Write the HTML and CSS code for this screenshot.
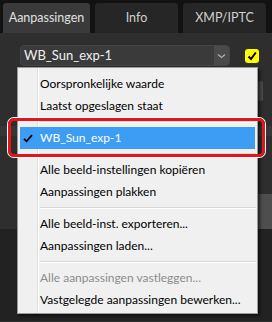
FILE: index.html
```html
<!DOCTYPE html>
<html lang="nl">
  <head>
    <meta charset="UTF-8" />
    <title>Aanpassingen</title>
    <link rel="stylesheet" href="styles.css">
  </head>
  <body>
    <div class="tabs">
      <div class="tab active">Aanpassingen</div>
      <div class="tab">Info</div>
      <div class="tab">XMP/IPTC</div>
    </div>
    <div class="panel">
      <div class="combo-row">
        <div class="combo">
          <span class="combo-text">WB_Sun_exp-1</span>
          <span class="combo-arrow">
            <svg width="9" height="6" viewBox="0 0 9 6"><path d="M1 1.5 L4.5 4.5 L8 1.5" fill="none" stroke="#b0b0b0" stroke-width="1.2"/></svg>
          </span>
        </div>
        <span class="check">
          <svg width="12" height="12" viewBox="0 0 12 12"><path d="M2.5 6.5 L5 9 L9.8 2.5" fill="none" stroke="#000" stroke-width="2"/></svg>
        </span>
      </div>

      <div class="behind">
        <div class="knob"></div>
        <div class="band"></div>
        <div class="block"></div>
        <div class="low"></div>
      </div>

      <ul class="menu">
        <li class="item">Oorspronkelijke waarde</li>
        <li class="item">Laatst opgeslagen staat</li>
        <li class="sep"></li>
        <li class="item selected">
          <svg class="tick" width="10" height="9" viewBox="0 0 10 9"><path d="M1 4.8 L3.6 7.3 L9 1.2" fill="none" stroke="#000" stroke-width="1.8"/></svg>
          WB_Sun_exp-1
        </li>
        <li class="sep"></li>
        <li class="item">Alle beeld-instellingen kopiëren</li>
        <li class="item">Aanpassingen plakken</li>
        <li class="sep"></li>
        <li class="item">Alle beeld-inst. exporteren...</li>
        <li class="item">Aanpassingen laden...</li>
        <li class="sep"></li>
        <li class="item disabled">Alle aanpassingen vastleggen...</li>
        <li class="item">Vastgelegde aanpassingen bewerken...</li>
      </ul>

      <div class="callout"></div>
    </div>
  </body>
</html>
```

FILE: styles.css
```css
body {
  margin: 0;
  width: 272px;
  height: 322px;
  overflow: hidden;
  background-color: #121212;
  font-family: Lato, "Noto Sans", sans-serif;
}

.tabs {
  display: flex;
  gap: 5px;
  padding: 3px 5px 0 3px;
  height: 30px;
}

.tab {
  height: 30px;
  line-height: 29px;
  text-align: center;
  font-size: 12.5px;
  color: #d0d0d0;
  background-color: #262626;
  border-radius: 3px 3px 0 0;
  width: 83px;
  white-space: nowrap;
}

.tab.active {
  width: 87px;
  background-color: #3a3a3a;
  color: #e0e0e0;
}

.panel {
  position: relative;
  height: 289px;
  background-color: #2e2e2e;
}

.combo-row {
  display: flex;
  align-items: center;
  padding: 12px 0 0 20px;
  gap: 15px;
}

.combo {
  display: flex;
  width: 210px;
  height: 21px;
  box-sizing: border-box;
  border: 1px solid #454545;
  border-radius: 4px;
  background-color: #3a3a3a;
  overflow: hidden;
}

.combo-text {
  flex: 1;
  padding-left: 3px;
  font-size: 13px;
  line-height: 19px;
  color: #f0f0f0;
}

.combo-arrow {
  width: 15px;
  display: flex;
  align-items: center;
  justify-content: center;
  background-color: #4a4a4a;
}

.check {
  width: 14px;
  height: 14px;
  border-radius: 3px;
  background-color: #ffff00;
  display: flex;
  align-items: center;
  justify-content: center;
}

.behind {
  display: flex;
  flex-direction: column;
  align-items: flex-end;
  padding-top: 15px;
}

.knob {
  width: 5px;
  height: 20px;
  margin-right: 9px;
  border-radius: 2px;
  background-color: #4a4a4a;
}

.band {
  width: 100%;
  height: 10px;
  margin-top: 25px;
  background-color: #363636;
}

.block {
  width: 14px;
  height: 35px;
  margin-top: 58px;
  background-color: #4e4e4e;
}

.low {
  width: 100%;
  height: 92px;
  background-color: #222;
}

.menu {
  position: absolute;
  left: 17px;
  top: 34px;
  width: 241px;
  height: 247px;
  box-sizing: border-box;
  margin: 0;
  padding: 5px 0 0;
  list-style: none;
  background-color: #f0f0f0;
  border: 1px solid #9a9a9a;
  box-shadow: 2px 2px 3px rgba(0, 0, 0, 0.6);
  background-image: linear-gradient(to right, transparent 19px, #dedede 19px, #dedede 20px, #fff 20px, #fff 21px, transparent 21px);
}

.item {
  position: relative;
  height: 22px;
  line-height: 22px;
  margin: 0 2px;
  padding-left: 20px;
  font-size: 12px;
  color: #000;
  white-space: nowrap;
}

.item.selected {
  background-color: #3d9cf4;
  color: #fff;
}

.item.disabled {
  color: #8c8c8c;
}

.tick {
  position: absolute;
  left: 3px;
  top: 7px;
}

.sep {
  height: 10px;
  margin-left: 22px;
  margin-right: 1px;
  background-image: linear-gradient(to bottom, transparent 4px, #d7d7d7 4px, #d7d7d7 5px, #fff 5px, #fff 6px, transparent 6px);
}

.callout {
  position: absolute;
  left: 8px;
  top: 85px;
  width: 257px;
  height: 39px;
  box-sizing: border-box;
  border: 3px solid #e3141b;
  border-radius: 6px;
  box-shadow: 0 0 0 1px #fff;
}
```
